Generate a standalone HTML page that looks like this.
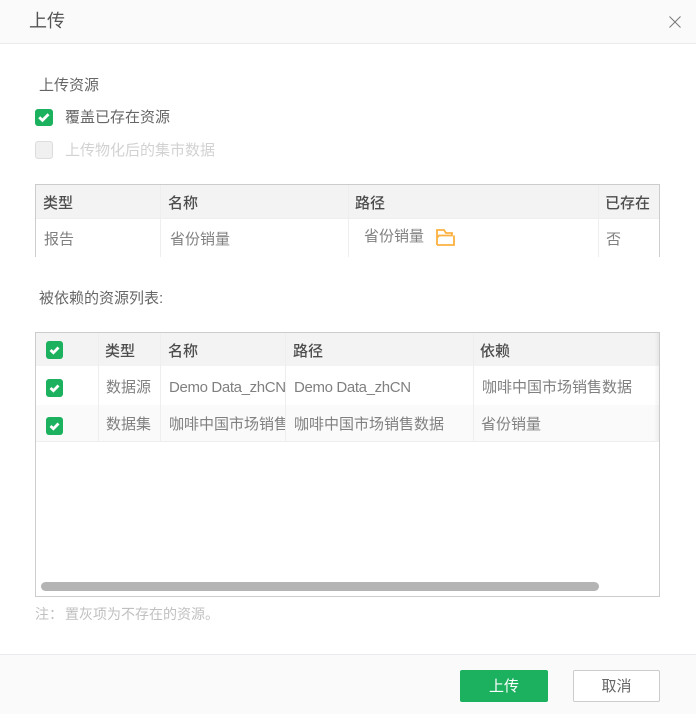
<!DOCTYPE html>
<html lang="zh">
<head>
<meta charset="utf-8">
<style>
html,body{margin:0;padding:0;background:#fff;}
body{width:696px;height:714px;position:relative;overflow:hidden;font-family:"Liberation Sans","Noto Sans CJK SC",sans-serif;font-size:15px;color:#666;}
.a{position:absolute;white-space:nowrap;}
.t{position:absolute;white-space:nowrap;line-height:20px;height:20px;overflow:hidden;}
.h{font-weight:500;color:#4d4d4d;font-size:15px;}
.c{color:#808080;font-size:15px;}
.l{letter-spacing:-.36px;}
.box{position:absolute;background:#1cb15e;border-radius:3px;}
.box svg{position:absolute;left:0;top:0;}
.v{position:absolute;width:1px;background:#eee;}
</style>
</head>
<body>
<div class="a" style="left:0;top:0;width:696px;height:43px;background:#fafafa;"></div>
<div class="a" style="left:0;top:43px;width:696px;height:1px;background:#ebebeb;"></div>
<div class="t" style="left:29px;top:9px;height:25px;line-height:25px;font-size:18px;color:#555;">上传</div>
<svg class="a" style="left:669px;top:16px;" width="12" height="12" viewBox="0 0 12 12"><path d="M.5 .5L11.500 11.500M11.500 .5L.5 11.500" stroke="#777" stroke-width="1" fill="none"/></svg>

<div class="t" style="left:39px;top:76px;color:#666;">上传资源</div>
<div class="box" style="left:35px;top:109px;width:18px;height:17px;"><svg width="18" height="17" viewBox="0 0 18 17"><path d="M4.200 8.300L7.500 11.300L13.500 5.300" stroke="#fff" stroke-width="2.800" fill="none"/></svg></div>
<div class="t" style="left:65px;top:108px;color:#666;">覆盖已存在资源</div>
<div class="a" style="left:35px;top:141px;width:16px;height:16px;background:#f0f0f0;border:1px solid #ddd;border-radius:3px;"></div>
<div class="t" style="left:65px;top:141px;color:#d2d2d2;">上传物化后的集市数据</div>

<!-- table 1 -->
<div class="a" style="left:35px;top:184px;width:625px;height:1px;background:#ccc;"></div>
<div class="a" style="left:35px;top:184px;width:1px;height:73px;background:#ccc;"></div>
<div class="a" style="left:659px;top:184px;width:1px;height:73px;background:#ccc;"></div>
<div class="a" style="left:36px;top:185px;width:623px;height:33px;background:#f3f3f3;"></div>
<div class="a" style="left:36px;top:218px;width:623px;height:1px;background:#eee;"></div>
<div class="v" style="left:160px;top:185px;height:72px;"></div>
<div class="v" style="left:348px;top:185px;height:72px;"></div>
<div class="v" style="left:598px;top:185px;height:72px;"></div>
<div class="t h" style="left:43px;top:194px;">类型</div>
<div class="t h" style="left:168px;top:194px;">名称</div>
<div class="t h" style="left:355px;top:194px;">路径</div>
<div class="t h" style="left:605px;top:194px;">已存在</div>
<div class="t c" style="left:44px;top:230px;">报告</div>
<div class="t c" style="left:170px;top:230px;">省份销量</div>
<div class="t c" style="left:364px;top:227px;">省份销量</div>
<svg class="a" style="left:435px;top:228px;" width="21" height="19" viewBox="0 0 21 19"><path d="M2 17V2H9L11 5H17V7.500H4L2 10M2 17H19V7.500" stroke="#fbb040" stroke-width="1.800" fill="none"/></svg>
<div class="t c" style="left:606px;top:230px;">否</div>

<div class="t" style="left:39px;top:289px;color:#666;">被依赖的资源列表:</div>

<!-- table 2 -->
<div class="a" style="left:35px;top:332px;width:623px;height:263px;border:1px solid #ccc;"></div>
<div class="a" style="left:36px;top:333px;width:623px;height:33px;background:#f3f3f3;"></div>
<div class="a" style="left:36px;top:405px;width:623px;height:36px;background:#fafafa;"></div>
<div class="a" style="left:36px;top:441px;width:623px;height:1px;background:#eee;"></div>
<div class="a" style="left:654px;top:333px;width:5px;height:108px;background:linear-gradient(to right,rgba(0,0,0,0),rgba(0,0,0,.05));"></div>
<div class="v" style="left:98px;top:333px;height:108px;"></div>
<div class="v" style="left:160px;top:333px;height:108px;"></div>
<div class="v" style="left:285px;top:333px;height:108px;"></div>
<div class="v" style="left:473px;top:333px;height:108px;"></div>

<div class="box" style="left:46px;top:341px;width:17px;height:18px;"><svg width="17" height="18" viewBox="0 0 17 18"><path d="M4.500 9L7.400 11.700L12.500 6.500" stroke="#fff" stroke-width="2.800" fill="none"/></svg></div>
<div class="box" style="left:46px;top:379px;width:17px;height:18px;"><svg width="17" height="18" viewBox="0 0 17 18"><path d="M4.500 9L7.400 11.700L12.500 6.500" stroke="#fff" stroke-width="2.800" fill="none"/></svg></div>
<div class="box" style="left:46px;top:417px;width:17px;height:18px;"><svg width="17" height="18" viewBox="0 0 17 18"><path d="M4.500 9L7.400 11.700L12.500 6.500" stroke="#fff" stroke-width="2.800" fill="none"/></svg></div>

<div class="t h" style="left:105px;top:342px;">类型</div>
<div class="t h" style="left:168px;top:342px;">名称</div>
<div class="t h" style="left:293px;top:342px;">路径</div>
<div class="t h" style="left:480px;top:342px;">依赖</div>

<div class="t c" style="left:106px;top:378px;">数据源</div>
<div class="t c l" style="left:169px;top:378px;width:116px;">Demo Data_zhCN</div>
<div class="t c l" style="left:294px;top:378px;">Demo Data_zhCN</div>
<div class="t c" style="left:482px;top:378px;">咖啡中国市场销售数据</div>

<div class="t c" style="left:106px;top:415px;">数据集</div>
<div class="t c" style="left:169px;top:415px;width:116px;">咖啡中国市场销售数据</div>
<div class="t c" style="left:294px;top:415px;">咖啡中国市场销售数据</div>
<div class="t c" style="left:481px;top:415px;">省份销量</div>

<div class="a" style="left:41px;top:582px;width:558px;height:9px;background:#b4b4b4;border-radius:5px;"></div>

<div class="t" style="left:35px;top:604px;color:#c0c0c0;font-size:14px;">注：<span style="margin-left:2px;">置灰项为不存在的资源。</span></div>

<!-- footer -->
<div class="a" style="left:0;top:654px;width:696px;height:1px;background:#e9ebf0;"></div>
<div class="a" style="left:0;top:655px;width:696px;height:59px;background:#fafafa;"></div>
<div class="a" style="left:460px;top:670px;width:88px;height:32px;background:#1cb15e;border-radius:2px;color:#fff;text-align:center;line-height:34px;">上传</div>
<div class="a" style="left:573px;top:670px;width:85px;height:30px;background:#fff;border:1px solid #ccc;border-radius:2px;color:#666;text-align:center;line-height:32px;">取消</div>
</body>
</html>
